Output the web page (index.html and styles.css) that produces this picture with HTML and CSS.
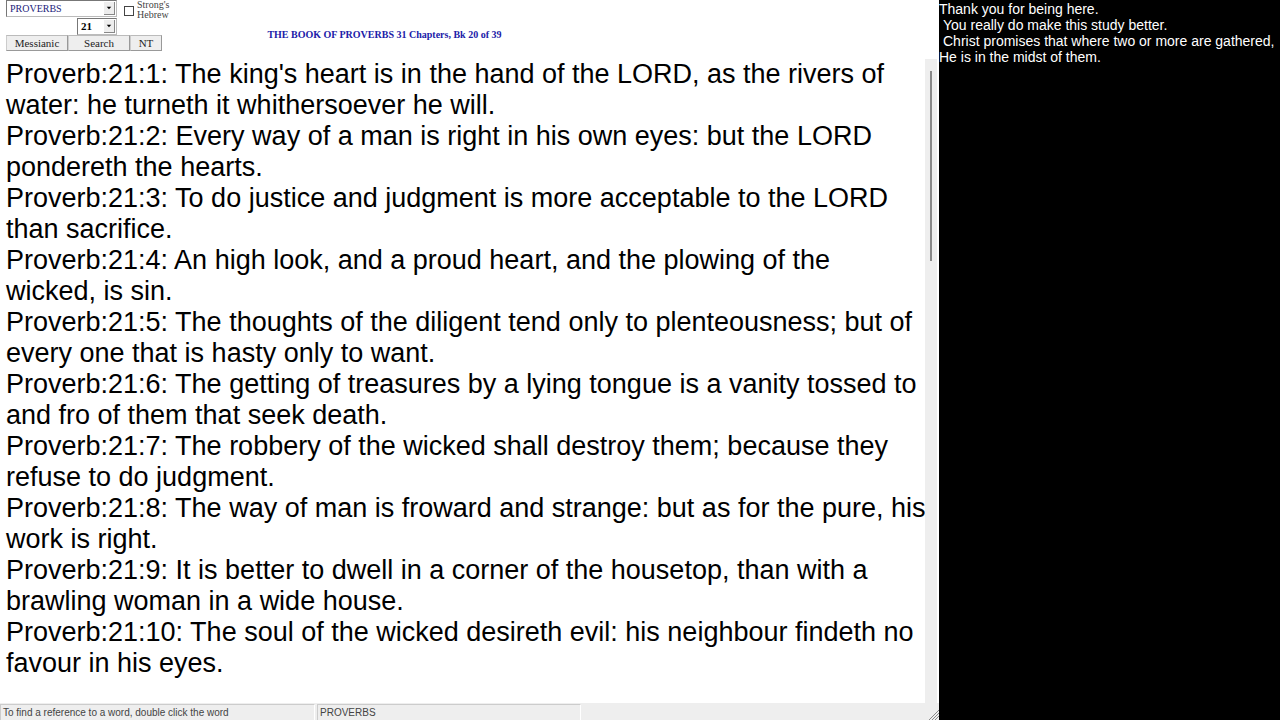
FILE: index.html
```
<!DOCTYPE html>
<html lang="en">
<head>
    <meta charset="UTF-8">
    <meta name="viewport" content="width=device-width, initial-scale=1.0">
    <title>Proverbs 21</title>
    <link rel="stylesheet" href="styles.css">
</head>
<body>
    <main class="reader">
        <header class="toolbar">
            <div class="controls">
                <div class="pickers">
                    <div class="picker book-picker">
                        <select id="book" aria-label="Book">
                            <option>PROVERBS</option>
                        </select>
                        <svg class="arrow" viewBox="0 0 11 13" aria-hidden="true"><path d="M3 5h5L5.500 8z"/></svg>
                    </div>
                    <div class="picker chapter-picker">
                        <select id="chapter" aria-label="Chapter">
                            <option>21</option>
                        </select>
                        <svg class="arrow" viewBox="0 0 11 13" aria-hidden="true"><path d="M3 5h5L5.500 8z"/></svg>
                    </div>
                </div>
                <div class="strongs">
                    <input type="checkbox" id="strongs">
                    <label for="strongs">Strong's<br>Hebrew</label>
                </div>
                <div class="buttons">
                    <button class="btn">Messianic</button>
                    <button class="btn">Search</button>
                    <button class="btn btn-small">NT</button>
                </div>
            </div>
            <h1>THE BOOK OF PROVERBS 31 Chapters, Bk 20 of 39</h1>
        </header>

        <div class="content">
            <div class="verses">
                <p>Proverb:21:1: The king's heart is in the hand of the LORD, as the rivers of<br>water: he turneth it whithersoever he will.</p>
                <p>Proverb:21:2: Every way of a man is right in his own eyes: but the LORD<br>pondereth the hearts.</p>
                <p>Proverb:21:3: To do justice and judgment is more acceptable to the LORD<br>than sacrifice.</p>
                <p>Proverb:21:4: An high look, and a proud heart, and the plowing of the<br>wicked, is sin.</p>
                <p>Proverb:21:5: The thoughts of the diligent tend only to plenteousness; but of<br>every one that is hasty only to want.</p>
                <p>Proverb:21:6: The getting of treasures by a lying tongue is a vanity tossed to<br>and fro of them that seek death.</p>
                <p>Proverb:21:7: The robbery of the wicked shall destroy them; because they<br>refuse to do judgment.</p>
                <p>Proverb:21:8: The way of man is froward and strange: but as for the pure, his<br>work is right.</p>
                <p>Proverb:21:9: It is better to dwell in a corner of the housetop, than with a<br>brawling woman in a wide house.</p>
                <p>Proverb:21:10: The soul of the wicked desireth evil: his neighbour findeth no<br>favour in his eyes.</p>
            </div>
            <div class="scrollbar"><div class="thumb"></div></div>
        </div>

        <footer class="statusbar">
            <span class="panel hint">To find a reference to a word, double click the word</span>
            <span class="panel book-name">PROVERBS</span>
            <svg class="grip" viewBox="0 0 10 10" aria-hidden="true"><path d="M0 10L10 0M3 10L10 3M6 10L10 6"/></svg>
        </footer>
    </main>

    <aside class="notes">
        <p>Thank you for being here.</p>
        <p class="indent">You really do make this study better.</p>
        <p class="indent">Christ promises that where two or more are gathered,</p>
        <p>He is in the midst of them.</p>
    </aside>
</body>
</html>
```

FILE: styles.css
```
* {
    box-sizing: border-box;
}

body {
    margin: 0;
    height: 100vh;
    display: flex;
    background: #000;
    font-family: "Liberation Sans", Arial, sans-serif;
}

p {
    margin: 0;
}

/* left side, the bible text */
.reader {
    flex: 1;
    min-width: 0;
    display: flex;
    flex-direction: column;
    background: #fff;
}

.toolbar {
    display: flex;
    gap: 98px;
    padding-left: 6px;
    font-family: "Liberation Serif", Georgia, serif;
}

.controls {
    display: grid;
    grid-template-columns: auto 1fr;
    column-gap: 7px;
}

.pickers {
    display: flex;
    flex-direction: column;
    align-items: flex-end;
    gap: 1px;
}

.picker {
    display: flex;
    height: 17px;
    padding: 1px;
    border: 1px solid #bbb;
    border-top-color: #777;
    border-left-color: #777;
}

.book-picker {
    width: 111px;
}

.chapter-picker {
    width: 40px;
}

.picker select {
    flex: 1;
    min-width: 0;
    appearance: none;
    border: 0;
    padding: 0 2px;
    background: #fff;
    color: #22227c;
    font-family: inherit;
    font-size: 10px;
    line-height: 13px;
}

.picker #chapter {
    color: #000;
    font-size: 11px;
    font-weight: bold;
}

.arrow {
    width: 11px;
    height: 13px;
    background: #eee;
    border-right: 1px solid #888;
    border-bottom: 1px solid #888;
}

.strongs {
    display: flex;
    align-items: flex-start;
    gap: 3px;
    color: #444;
    font-size: 10px;
    line-height: 10px;
}

.strongs input {
    appearance: none;
    width: 10px;
    height: 10px;
    margin: 6px 0 0;
    border: 1px solid #444;
    background: #fff;
}

.buttons {
    grid-column: 1 / 3;
    display: flex;
}

.btn {
    width: 62px;
    height: 16px;
    padding: 0;
    border: 1px solid #999;
    border-left-color: #ccc;
    border-top-color: #bbb;
    background: #eee;
    color: #222;
    font-family: inherit;
    font-size: 11px;
    line-height: 14px;
}

.btn-small {
    width: 32px;
}

h1 {
    margin: 29px 0 0;
    color: #2020a8;
    font-size: 10px;
    line-height: 12px;
    white-space: nowrap;
}

.content {
    flex: 1;
    min-height: 0;
    display: flex;
    padding: 8px 2px 0 6px;
}

.verses {
    flex: 1;
    min-width: 0;
    font-size: 27px;
    line-height: 31px;
    white-space: nowrap;
}

.scrollbar {
    width: 12px;
    padding: 12px 5px 0;
    background: #eee;
}

.thumb {
    height: 30%;
    background: #888;
}

/* bottom bar */
.statusbar {
    display: flex;
    height: 17px;
    padding-top: 1px;
    gap: 2px;
    background: #eee;
    color: #444;
    font-size: 10px;
    line-height: 15px;
}

.panel {
    padding-left: 2px;
    border: 1px solid #ccc;
    border-right-color: #fff;
    border-bottom: 0;
    white-space: nowrap;
}

.hint {
    width: 315px;
}

.book-name {
    width: 264px;
}

.grip {
    width: 10px;
    height: 10px;
    margin: 6px 0 0 auto;
    fill: none;
    stroke: #888;
}

/* right side */
.notes {
    width: 341px;
    padding-top: 1px;
    color: #fff;
    font-size: 14px;
    line-height: 16px;
}

.indent {
    padding-left: 4px;
}
```
